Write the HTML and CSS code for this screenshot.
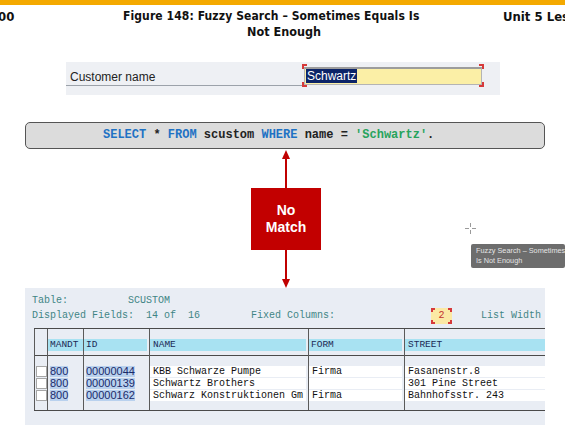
FILE: index.html
```html
<!DOCTYPE html>
<html lang="en">
<head>
<meta charset="utf-8">
<title>Fuzzy Search</title>
<link rel="stylesheet" href="styles.css">
</head>
<body>
<div class="topbar"></div>
<header class="header">
  <div class="h-left">00</div>
  <div class="title">
    <div class="t1">Figure 148: Fuzzy Search – Sometimes Equals Is</div>
    <div class="t2">Not Enough</div>
  </div>
  <div class="h-right">Unit 5 Lesson</div>
</header>

<section class="cust">
  <div class="cust-label">Customer name</div>
  <div class="cust-field">
    <div class="cust-input"><span class="sel">Schwartz</span></div>
    <i class="corner tl"></i><i class="corner tr"></i><i class="corner bl"></i><i class="corner br"></i>
  </div>
</section>

<div class="sql"><span class="kw">SELECT</span> * <span class="kw">FROM</span> scustom <span class="kw">WHERE</span> name = <span class="str">'Schwartz'</span>.</div>

<div class="connector">
  <svg class="arrow" width="10" height="39" viewBox="0 0 10 39"><line x1="5" y1="8" x2="5" y2="39" stroke="#c00000" stroke-width="2"/><polygon points="5,1 1,10 9,10" fill="#c00000"/></svg>
  <div class="nomatch">No<br>Match</div>
  <svg class="arrow" width="10" height="38" viewBox="0 0 10 38"><line x1="5" y1="0" x2="5" y2="30" stroke="#c00000" stroke-width="2"/><polygon points="5,38 1,29 9,29" fill="#c00000"/></svg>
</div>

<section class="sap">
  <div class="info">Table:          SCUSTOM</div>
  <div class="info line2"><span class="f1">Displayed Fields:  14 of  16</span><span class="f2">Fixed Columns:</span><span class="fixbox">2<i class="corner tl"></i><i class="corner tr"></i><i class="corner bl"></i><i class="corner br"></i></span><span class="f3">List Width</span></div>
  <div class="tbl">
    <div class="col c-chk">
      <div class="hd"></div>
      <div class="rows">
        <div class="cell"><span class="cb"></span></div>
        <div class="cell"><span class="cb"></span></div>
        <div class="cell"><span class="cb"></span></div>
      </div>
    </div>
    <div class="col c-mandt">
      <div class="hd"><span class="lab">MANDT</span></div>
      <div class="rows">
        <div class="cell"><span class="hl">800</span></div>
        <div class="cell"><span class="hl">800</span></div>
        <div class="cell"><span class="hl">800</span></div>
      </div>
    </div>
    <div class="col c-id">
      <div class="hd"><span class="lab">ID</span></div>
      <div class="rows">
        <div class="cell"><span class="hl">00000044</span></div>
        <div class="cell"><span class="hl">00000139</span></div>
        <div class="cell"><span class="hl">00000162</span></div>
      </div>
    </div>
    <div class="col c-name">
      <div class="hd"><span class="lab">NAME</span></div>
      <div class="rows">
        <div class="cell wc">KBB Schwarze Pumpe</div>
        <div class="cell wc">Schwartz Brothers</div>
        <div class="cell wc">Schwarz Konstruktionen Gm</div>
      </div>
    </div>
    <div class="col c-form">
      <div class="hd"><span class="lab">FORM</span></div>
      <div class="rows">
        <div class="cell wc">Firma</div>
        <div class="cell wc"></div>
        <div class="cell wc">Firma</div>
      </div>
    </div>
    <div class="col c-street">
      <div class="hd"><span class="lab">STREET</span></div>
      <div class="rows">
        <div class="cell wc">Fasanenstr.8</div>
        <div class="cell wc">301 Pine Street</div>
        <div class="cell wc">Bahnhofsstr. 243</div>
      </div>
    </div>
  </div>
</section>

<svg class="cross" width="11" height="11" viewBox="0 0 11 11"><path d="M5.5 0v4M5.5 7v4M0 5.5h4M7 5.5h4" stroke="#9a9a9a" stroke-width="1"/></svg>
<div class="tip">Fuzzy Search – Sometimes<br>Is Not Enough</div>
</body>
</html>
```

FILE: styles.css
```css
* { box-sizing: border-box; margin: 0; padding: 0; }
html, body { width: 565px; height: 428px; overflow: hidden; background: #fff; }
body { position: relative; font-family: "Liberation Sans", Arial, sans-serif; color: #111; }

.topbar { height: 5px; background: #f4a900; }

.header {
  display: flex;
  height: 57px;
  padding-top: 4px;
  font-family: "DejaVu Sans", "Liberation Sans", sans-serif;
  font-stretch: condensed;
  font-weight: bold;
  font-size: 12px;
  line-height: 15px;
  color: #111;
  white-space: nowrap;
}
.h-left { width: 125px; margin-left: -2px; flex: none; font-size: 13px; }
.title { width: 322px; flex: none; }
.t1 { text-align: left; letter-spacing: 0.1px; }
.t2 { text-align: center; font-size: 12.5px; }
.h-right { margin-left: 58px; flex: none; font-size: 13px; }

/* customer name field */
.cust {
  margin-left: 66px;
  width: 434px;
  height: 33px;
  background: #eef0f4;
  display: flex;
  align-items: flex-start;
}
.cust-label {
  width: 236px;
  flex: none;
  padding: 8px 0 1px 4px;
  line-height: 14px;
  font-size: 12px;
  color: #222;
  border-bottom: 1px solid #9ca2aa;
}
.cust-field {
  position: relative;
  flex: none;
  width: 182px;
  height: 23px;
  margin-top: 2px;
  padding: 3px 2px 2px 2px;
}
.cust-input {
  height: 18px;
  background: #fbefa6;
  border: 1px solid #b4b4b4;
  border-top: 2px solid #9c9c9c;
  padding-left: 1px;
  line-height: 14px;
  font-size: 12px;
}
.sel { background: #0c2468; color: #fff; padding: 0 1px; }

.corner { position: absolute; width: 5px; height: 5px; border: 0 solid #d63a3a; }
.corner.tl { left: 0; top: 0; border-width: 2px 0 0 2px; }
.corner.tr { right: 0; top: 0; border-width: 2px 2px 0 0; }
.corner.bl { left: 0; bottom: 0; border-width: 0 0 2px 2px; }
.corner.br { right: 0; bottom: 0; border-width: 0 2px 2px 0; }

/* SQL statement */
.sql {
  margin: 27px 0 0 25px;
  width: 520px;
  height: 27px;
  background: #dcdcdc;
  border: 1px solid #555;
  border-radius: 5px;
  padding-left: 77px;
  font-family: "Liberation Mono", "Courier New", monospace;
  font-weight: bold;
  font-size: 12px;
  line-height: 25px;
  color: #222;
  white-space: pre;
}
.kw { color: #1f72c4; }
.str { color: #27a35c; }

/* connector with No Match */
.connector {
  margin-left: 251px;
  width: 70px;
  display: flex;
  flex-direction: column;
  align-items: center;
}
.arrow { display: block; }
.nomatch {
  width: 70px;
  height: 62px;
  background: #c20000;
  color: #fff;
  font-weight: bold;
  font-size: 14px;
  line-height: 17px;
  text-align: center;
  padding-top: 14px;
}

/* SAP list panel */
.sap {
  margin-left: 25px;
  width: 520px;
  height: 137px;
  background: #e9edf4;
  padding: 6px 0 0 7px;
  overflow: hidden;
  font-family: "Liberation Mono", "Courier New", monospace;
  font-size: 10px;
}
.info { line-height: 14px; color: #3f8585; white-space: pre; }
.line2 { display: flex; align-items: center; }
.f1 { width: 219px; flex: none; }
.f2 { width: 180px; flex: none; }
.fixbox {
  position: relative;
  flex: none;
  width: 21px;
  height: 16px;
  background: #fbe9a4;
  color: #c43030;
  text-align: center;
  line-height: 16px;
}
.fixbox .corner { width: 4px; height: 4px; border-color: #d63a3a; }
.f3 { margin-left: 29px; flex: none; }

.tbl {
  display: flex;
  margin: 4px 0 0 2px;
  width: 530px;
  border-top: 1px solid #4a4a4a;
  border-bottom: 1px solid #4a4a4a;
}
.col { border-left: 1px solid #5a5a5a; flex: none; }
.c-chk { width: 13px; }
.c-mandt { width: 36px; }
.c-id { width: 66px; }
.c-name { width: 159px; }
.c-form { width: 96px; }
.c-street { width: 160px; }

.hd { height: 27px; padding-top: 10px; border-bottom: 1px solid #4a4a4a; }
.lab {
  display: block;
  height: 12px;
  margin-right: 2px;
  background: #a8e2f2;
  line-height: 12px;
  padding-left: 2px;
  font-size: 9.5px;
  color: #1b2a55;
}
.c-mandt .lab { margin-right: 0; }
.c-name .lab, .c-street .lab { padding-left: 3px; }

.rows { padding: 10px 0 8px; }
.cell { height: 12px; white-space: nowrap; overflow: hidden; }
.cb {
  display: block;
  width: 11px;
  height: 11px;
  margin-left: 1px;
  background: #fff;
  border: 1px solid #a6a6a6;
}
.hl {
  display: inline-block;
  margin-left: 2px;
  background: #b9d1ee;
  font-family: "Liberation Sans", Arial, sans-serif;
  font-size: 11px;
  line-height: 11px;
  color: #1a2a6a;
}
.wc {
  height: 11px;
  margin: 0 2px 1px 0;
  background: #fff;
  padding-left: 3px;
  line-height: 11px;
  color: #111;
}

/* overlays */
.cross { position: absolute; left: 465px; top: 223px; }
.tip {
  position: absolute;
  left: 471px;
  top: 244px;
  width: 94px;
  height: 24px;
  background: #6d6d6d;
  border-radius: 2px;
  padding: 2px 0 0 5px;
  font-size: 7.3px;
  line-height: 10px;
  color: #e4e4e4;
  white-space: nowrap;
}
```
